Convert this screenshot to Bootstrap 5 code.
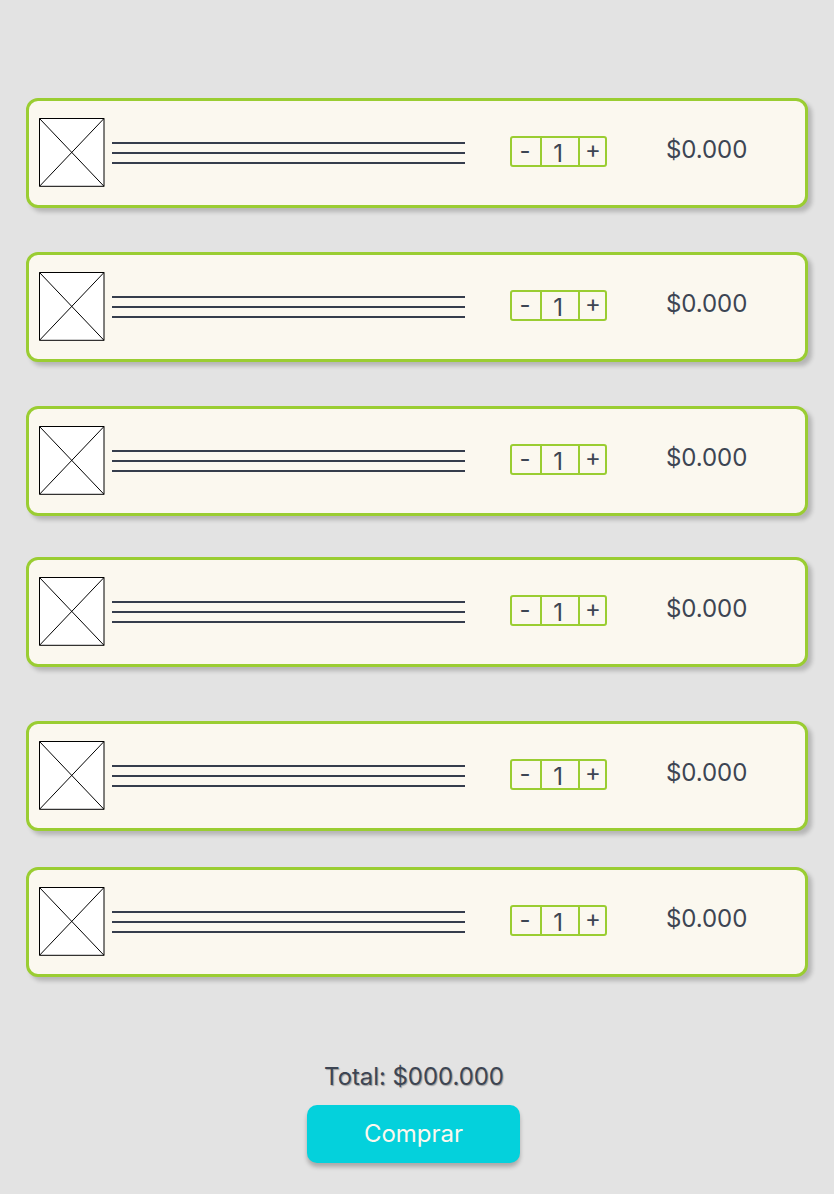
<!DOCTYPE html>
<html lang="es">
<head>
<meta charset="utf-8">
<meta name="viewport" content="width=device-width, initial-scale=1">
<title>Carrito</title>
<link href="https://cdn.jsdelivr.net/npm/bootstrap@5.3.0/dist/css/bootstrap.min.css" rel="stylesheet">
<style>
body{background:#e3e3e3;color:#3d4553;font-family:Inter,sans-serif;font-size:24px;font-weight:400;letter-spacing:-.07px;line-height:29px;min-height:1194px}
.cart{padding:98px 26px 0}
.item{height:110px;border:3px solid #9acd32;border-radius:12px;background:#fbf8ef;box-shadow:4px 4px 4px rgba(0,0,0,.2);padding:17px 0 0 10px;margin-bottom:44px}
.item:nth-child(3){margin-bottom:41px}
.item:nth-child(4){margin-bottom:54px}
.item:nth-child(5){margin-bottom:36px}
.item:nth-child(6){margin-bottom:0}
.thumb{width:66px;height:69px;flex:none}
.desc{width:353.5px;margin:24px 0 0 6.5px;gap:8px}
.desc span{height:2px;background:#353d4c}
.qty{width:97px;height:31px;margin:18px 0 0 45px;border:2px solid #9acd32;border-radius:3px;overflow:hidden}
.qty button{border:0;background:none;color:inherit;font-weight:inherit;padding:0 0 3px;line-height:24px;height:27px}
.qty .minus{width:28px;padding:0 2px 1px 0}
.qty .plus{width:25px;padding-left:1px}
.qty .num{width:40px;border:solid #9acd32;border-width:0 2px;padding-right:4px;line-height:31px;height:27px}
.price{margin:17px 0 0 59px}
.total{margin-top:85px;padding-right:6px;text-shadow:1px 1px 1px rgba(0,0,0,.3)}
.buy{width:213px;height:58px;margin:14px 7px 0 0;border:0;border-radius:10px;background:#04d1dc;color:#fcf8ef;font-size:24px;font-weight:400;line-height:29px;box-shadow:0 4px 4px rgba(0,0,0,.25)}
.buy span{display:block;margin-top:-2px}
</style>
</head>
<body>
<main>
<div class="cart" id="cart"></div>
<div class="d-flex flex-column align-items-center">
<div class="total">Total: $000.000</div>
<button class="btn buy p-0"><span>Comprar</span></button>
</div>
</main>
<script src="https://cdn.jsdelivr.net/npm/bootstrap@5.3.0/dist/js/bootstrap.bundle.min.js"></script>
<script>
document.getElementById('cart').innerHTML = Array(6).fill(`
<article class="item d-flex align-items-start">
<svg class="thumb" viewBox="0 0 66 69"><path d="M.5 .5H65V68.3H.5ZL65 68.3M65 .5L.5 68.3" fill="#fff" stroke="#000"/></svg>
<div class="desc d-flex flex-column"><span></span><span></span><span></span></div>
<div class="qty d-flex"><button class="minus">-</button><div class="num text-center">1</div><button class="plus">+</button></div>
<div class="price">$0.000</div>
</article>`).join('');
</script>
</body>
</html>
